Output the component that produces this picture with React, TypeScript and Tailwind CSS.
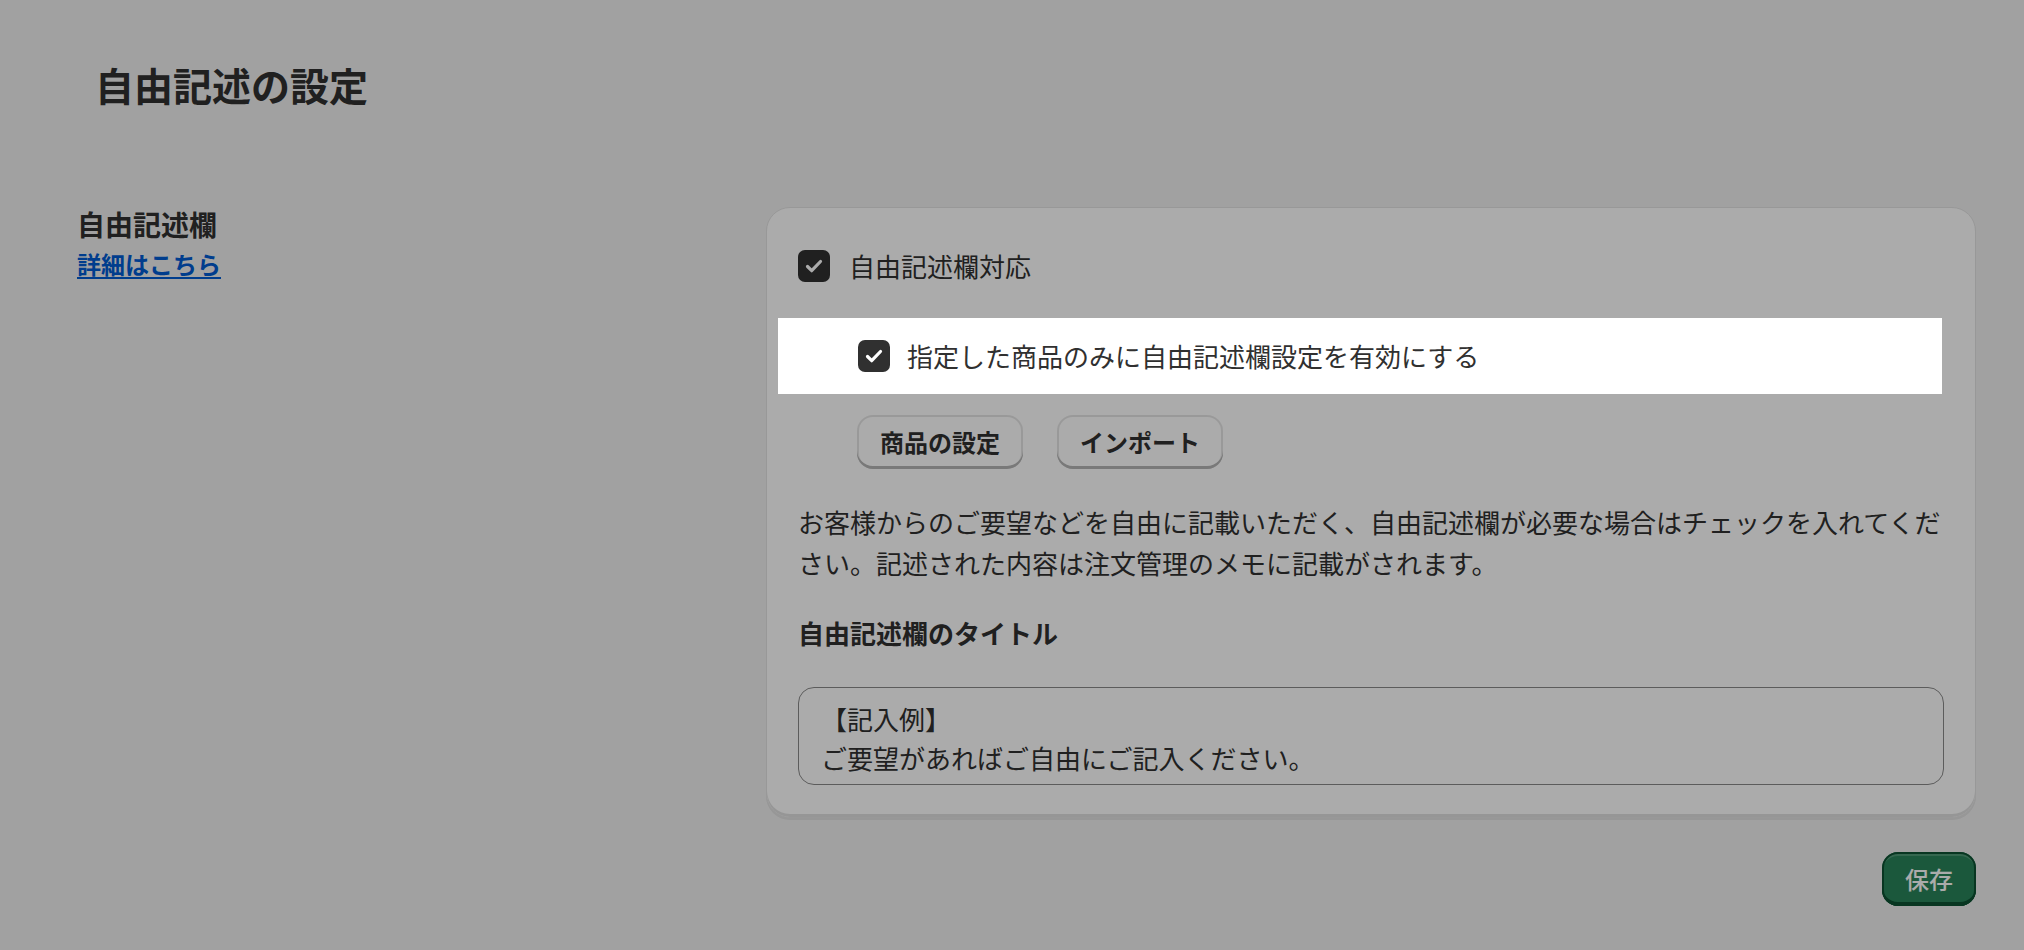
import React from "react";

const font = "font-['Noto_Sans_CJK_JP','Noto_Sans',sans-serif]";

function CheckBox() {
  return (
    <span className="flex h-8 w-8 shrink-0 items-center justify-center rounded-[7px] bg-[#303030]">
      <svg width="32" height="32" viewBox="0 0 32 32" fill="none">
        <path d="M9.5 16.5l4.2 4.2 8.8-9.2" stroke="#ffffff" strokeWidth="3.2" strokeLinecap="round" strokeLinejoin="round" />
      </svg>
    </span>
  );
}

function SecondaryButton({ label }: { label: string }) {
  return (
    <button
      type="button"
      className="flex h-[54px] items-center rounded-[16px] bg-white px-[23px] text-[24px] font-bold leading-none text-[#303030] shadow-[inset_0_-3px_0_0_#b5b5b5,inset_0_0_0_2px_rgba(0,0,0,0.1)]"
    >
      {label}
    </button>
  );
}

export default function App() {
  return (
    <div className={`min-h-screen bg-[#f1f1f1] ${font} text-[#303030]`}>
      <div className="pl-[77px] pr-[48px] pt-[60px] pb-10">
        <h1 className="pl-[18px] text-[39px] font-bold leading-[48px]">自由記述の設定</h1>

        <div className="mt-[99px] grid grid-cols-[689px_1fr] items-start">
          {/* left annotation */}
          <div>
            <h2 className="text-[28px] font-bold leading-[34px]">自由記述欄</h2>
            <a href="#" className="mt-[3px] block w-fit text-[24px] font-bold leading-[40px] text-[#005bd3] underline underline-offset-[3px]">
              詳細はこちら
            </a>
          </div>

          {/* settings card */}
          <div className="rounded-[24px] border border-[#e3e3e3] bg-white px-[31px] pt-[38px] pb-[32px] shadow-[0_2px_0_0_rgba(26,26,26,0.07),inset_0_-3px_0_0_rgba(0,0,0,0.12)]">
            <label className="flex items-center gap-[19px] text-[26px] leading-[40px]">
              <CheckBox />
              <span>自由記述欄対応</span>
            </label>

            {/* highlighted (tour spotlight) row */}
            <div className="relative z-20 -ml-[20px] mr-[2px] mt-[32px] bg-white py-[18px] pl-[80px]">
              <label className="flex items-center gap-[17px] text-[26px] leading-[40px]">
                <CheckBox />
                <span>指定した商品のみに自由記述欄設定を有効にする</span>
              </label>
            </div>

            <div className="ml-[59px] mt-[21px] flex gap-[34px]">
              <SecondaryButton label="商品の設定" />
              <SecondaryButton label="インポート" />
            </div>

            <p className="mt-[32px] text-[26px] leading-[41px]">
              お客様からのご要望などを自由に記載いただく、自由記述欄が必要な場合はチェックを入れてください。記述された内容は注文管理のメモに記載がされます。
            </p>

            <h3 className="mt-[30px] text-[26px] font-bold leading-[40px]">自由記述欄のタイトル</h3>

            <textarea
              rows={2}
              readOnly
              defaultValue={"【記入例】\nご要望があればご自由にご記入ください。"}
              className="mt-[34px] block h-[98px] w-full resize-none overflow-hidden rounded-[16px] border border-[#8a8a8a] bg-white px-[22px] pt-[11px] pb-[7px] text-[26px] leading-[39px] text-[#303030] outline-none"
            />
          </div>
        </div>

        <div className="mt-[34px] flex justify-end">
          <button
            type="button"
            className="flex h-[54px] items-center rounded-[16px] bg-[#29845a] px-[23px] text-[24px] font-medium leading-none text-white shadow-[inset_0_-4px_0_0_#0c5132,inset_0_0_0_2px_#0c5132,inset_0_4px_0_0_rgba(255,255,255,0.18)]"
          >
            保存
          </button>
        </div>
      </div>

      {/* dimming overlay */}
      <div className="pointer-events-none fixed inset-0 z-10 bg-black/[0.33]" />
    </div>
  );
}
